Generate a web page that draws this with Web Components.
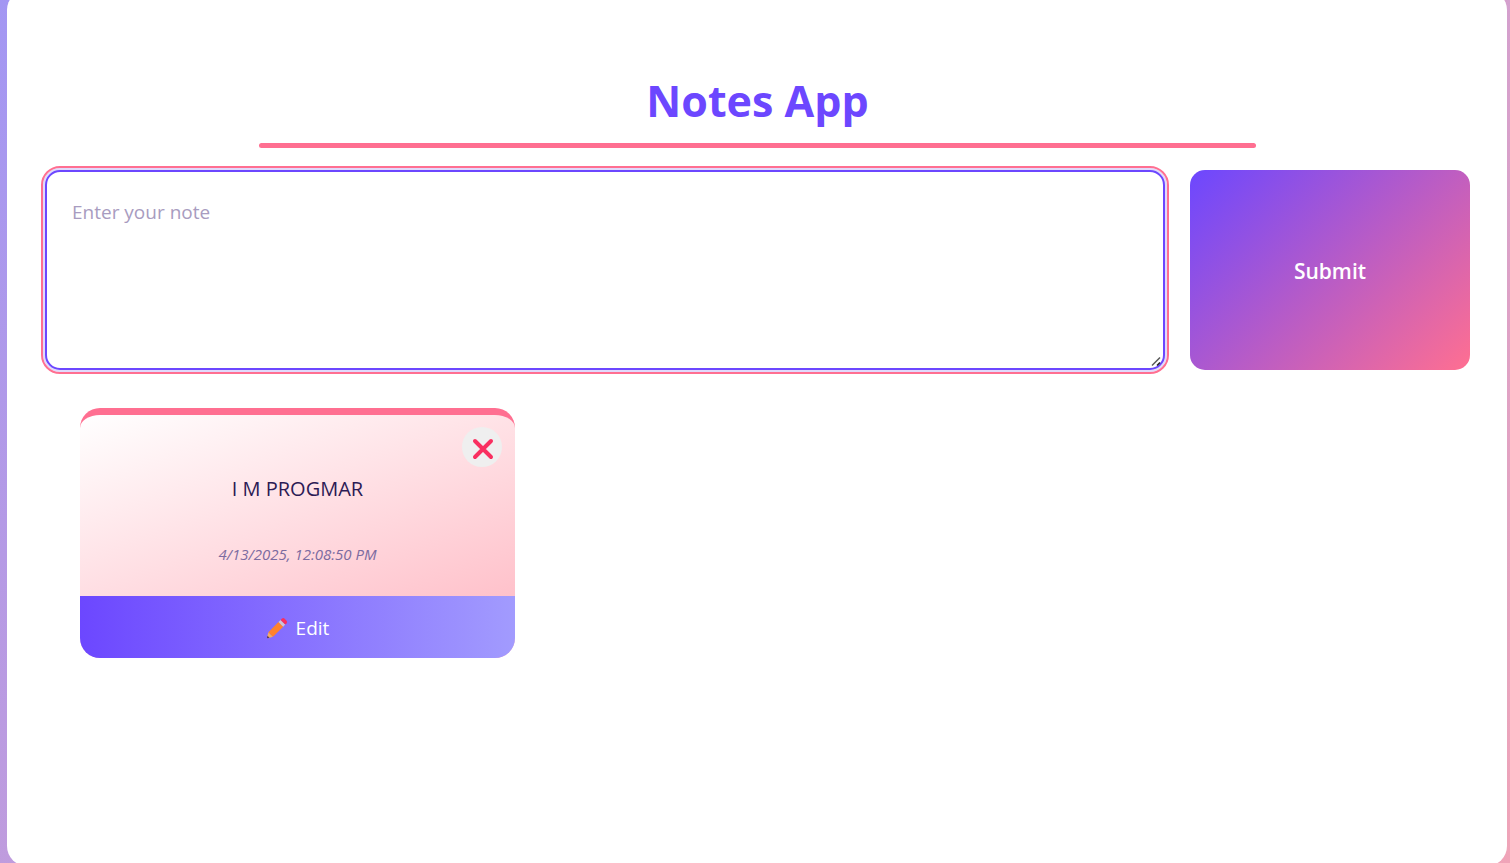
<!DOCTYPE html>
<html lang="en">
<head>
<meta charset="utf-8">
<meta name="viewport" content="width=device-width, initial-scale=1">
<title>Notes App</title>
<style>
html { height: 100%; background: linear-gradient(135deg, #a397f3, #f0a4b8); }
body {
  margin: 0; height: 100%; overflow: hidden;
  font-family: "Segoe UI", "Open Sans", "Noto Sans", sans-serif;
  --violet: #6c47ff; --violet-light: #a29bfe; --pink: #ff6f91; --ink: #2d1b55;
}
</style>
</head>
<body>
<notes-app>
  <note-form slot="form"></note-form>
  <note-card date="4/13/2025, 12:08:50 PM">I M PROGMAR</note-card>
</notes-app>

<template id="notes-app">
<style>
:host { display: block; margin: -10px 3px 0 7px; }
main { box-sizing: border-box; min-height: calc(100vh + 13px); padding: 81px 37px 38px 38px; background: #fff; border-radius: 20px; }
h1 { width: 70%; margin: 0 auto 22px; color: var(--violet); font-size: 43px; line-height: 60px; font-weight: 700; text-align: center; }
h1::after { content: ""; display: block; height: 5px; margin-top: 12px; border-radius: 3px; background: var(--pink); }
.list { display: grid; grid-template-columns: repeat(3, 1fr); gap: 25px; padding: 38px 35px 0; }
</style>
<main>
  <h1>Notes App</h1>
  <slot name="form"></slot>
  <section class="list" aria-label="Notes"><slot></slot></section>
</main>
</template>

<template id="note-form">
<style>
:host { display: block; }
form { display: grid; grid-template-columns: 4fr 1fr; gap: 25px; height: 200px; }
.field { position: relative; }
textarea, button { box-sizing: border-box; margin: 0; width: 100%; height: 100%; border-radius: 15px; font-family: inherit; }
textarea { display: block; padding: 25px; border: 2px solid var(--violet); outline: 2px solid var(--pink); outline-offset: 2px; box-shadow: 0 0 0 2px #e0dafb; background: #fff; color: var(--ink); font-size: 19px; line-height: 30px; resize: none; }
textarea::placeholder { color: #a89cc0; opacity: 1; }
.grip { position: absolute; right: 3px; bottom: 3px; width: 11px; height: 11px; pointer-events: none; }
button { padding: 2px 0 0; border: 0; background: linear-gradient(135deg, var(--violet), var(--pink)); color: #fff; font-size: 21px; font-weight: 600; }
</style>
<form>
  <div class="field">
    <textarea placeholder="Enter your note" aria-label="Enter your note"></textarea>
    <svg class="grip" viewBox="0 0 11 11" aria-hidden="true"><path d="M1 9.5L9 1.5" stroke="#555" stroke-width="1.4"/><path d="M6 9.5L9 6.5" stroke="#222" stroke-width="1.6"/></svg>
  </div>
  <button type="button">Submit</button>
</form>
</template>

<template id="note-card">
<style>
:host { display: block; }
article { position: relative; display: flex; flex-direction: column; box-sizing: border-box; min-height: 250px; overflow: hidden; border-top: 7px solid var(--pink); border-radius: 20px; background: linear-gradient(160deg, #fff, #ffb6c1); text-align: center; }
p { margin: 0; padding-top: 59px; color: var(--ink); font-size: 20px; line-height: 30px; }
time { padding-top: 38px; color: #7c6ba0; font-size: 15px; line-height: 24px; font-style: italic; }
.close { position: absolute; top: 12px; right: 13px; display: grid; place-items: center; width: 40px; height: 40px; padding: 0; border: 0; border-radius: 50%; background: #efefef; }
.close svg { width: 22px; height: 22px; margin: 3px 0 0 2px; }
.edit { display: flex; align-items: center; justify-content: center; gap: 8px; box-sizing: border-box; height: 62px; margin-top: auto; padding: 2px 0 0; border: 0; background: linear-gradient(90deg, var(--violet), var(--violet-light)); color: #fff; font: 19px/30px "Segoe UI", "Open Sans", "Noto Sans", sans-serif; }
.edit svg { width: 22px; height: 22px; }
</style>
<article>
  <button class="close" type="button" aria-label="Delete note"><svg viewBox="0 0 22 22"><path d="M3 3L19 19M19 3L3 19" stroke="#f92f60" stroke-width="4" stroke-linecap="round"/></svg></button>
  <p><slot></slot></p>
  <time></time>
  <button class="edit" type="button"><svg viewBox="0 0 22 22" aria-hidden="true">
    <path d="M1 20.5L2.4 15.2 7 19.7 1.8 21.2Q.8 21.4 1 20.5Z" fill="#f3ad61"/>
    <path d="M1 20.5L1.5 18.8 3.5 20.7 1.8 21.2Q.8 21.4 1 20.5Z" fill="#533566"/>
    <path d="M2.4 15.2L12.5 5.1 17.2 9.8 7 19.7Z" fill="#ff822d"/>
    <path d="M12.5 5.1L14.6 3 19.2 7.6 17.2 9.8Z" fill="#cdc4d6"/>
    <path d="M14.6 3L16 1.6Q17.2.5 18.4 1.6L20.6 3.8Q21.7 5 20.6 6.2L19.2 7.6Z" fill="#f92f60"/>
  </svg><span>Edit</span></button>
</article>
</template>

<script>
class TemplateElement extends HTMLElement {
  constructor() {
    super();
    const template = document.getElementById(this.localName);
    this.attachShadow({ mode: "open" }).append(template.content.cloneNode(true));
  }
}
class NotesApp extends TemplateElement {}
class NoteForm extends TemplateElement {}
class NoteCard extends TemplateElement {
  connectedCallback() {
    this.shadowRoot.querySelector("time").textContent = this.getAttribute("date");
    this.shadowRoot.querySelector(".close").addEventListener("click", () => this.remove());
  }
}
customElements.define("notes-app", NotesApp);
customElements.define("note-form", NoteForm);
customElements.define("note-card", NoteCard);
</script>
</body>
</html>
